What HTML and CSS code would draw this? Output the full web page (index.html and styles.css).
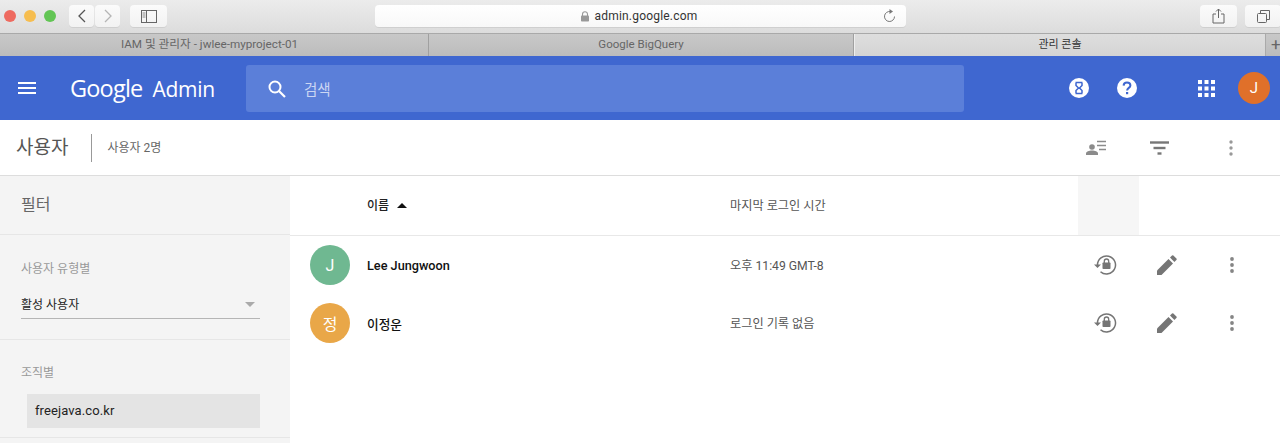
FILE: index.html
```html
<!DOCTYPE html>
<html lang="ko">
<head>
<meta charset="utf-8">
<title>관리 콘솔</title>
<link rel="stylesheet" href="styles.css">
</head>
<body>
<div class="toolbar">
  <div class="lights"><i class="light red"></i><i class="light yellow"></i><i class="light green"></i></div>
  <div class="navbtns">
    <div class="tbtn nav"><svg width="10" height="16" viewBox="0 0 10 16"><path d="M8 2 2 8l6 6" fill="none" stroke="#555" stroke-width="1.3"/></svg></div>
    <div class="tbtn nav"><svg width="10" height="16" viewBox="0 0 10 16"><path d="m2 2 6 6-6 6" fill="none" stroke="#b5b5b5" stroke-width="1.3"/></svg></div>
  </div>
  <div class="tbtn side"><svg width="16" height="13" viewBox="0 0 16 13"><rect x=".5" y=".5" width="15" height="12" fill="none" stroke="#666"/><path d="M5.5 0v13" stroke="#666"/><path d="M1.5 3h3M1.5 5h3M1.5 7h3" stroke="#888"/></svg></div>
  <div class="address">
    <span class="addr-text"><svg class="lock" width="8" height="11" viewBox="0 0 8 11"><path d="M1.5 5V3.2a2.5 2.5 0 0 1 5 0V5" fill="none" stroke="#999" stroke-width="1.1"/><rect y="4.5" width="8" height="6" rx=".8" fill="#999"/></svg>admin.google.com</span>
    <svg class="reload" width="13" height="14" viewBox="0 0 13 14"><path d="M7.5 2.6A5 5 0 1 0 11.5 7.5" fill="none" stroke="#777"/><path d="M6.5 0 10 2.6 6.5 5z" fill="#777"/></svg>
  </div>
  <div class="tbtn right"><svg width="13" height="16" viewBox="0 0 13 16"><path d="M4 6H1v9h11V6H9" fill="none" stroke="#666"/><path d="M6.5 10V1M4 3.5 6.5 1 9 3.5" fill="none" stroke="#666"/></svg></div>
  <div class="tbtn right last"><svg width="13" height="13" viewBox="0 0 13 13"><rect x=".5" y="3.5" width="9" height="9" rx="1" fill="none" stroke="#666"/><path d="M3.5 3V.5h9v9H10" fill="none" stroke="#666"/></svg></div>
</div>
<div class="tabs">
  <div class="tab">IAM 및 관리자 - jwlee-myproject-01</div>
  <div class="tab">Google BigQuery</div>
  <div class="tab active">관리 콘솔</div>
  <div class="tab-add">+</div>
</div>
<header class="appbar">
  <svg class="burger" width="18" height="12" viewBox="0 0 18 12"><path d="M0 1h18M0 6h18M0 11h18" stroke="#fff" stroke-width="2"/></svg>
  <div class="logo"><span class="logo-g">Google</span><span class="logo-a">Admin</span></div>
  <div class="search">
    <svg width="20" height="20" viewBox="0 0 20 20"><circle cx="8" cy="8" r="5.5" fill="none" stroke="#fff" stroke-width="2"/><path d="m12 12 6 6" stroke="#fff" stroke-width="2.2"/></svg>
    <span class="search-text">검색</span>
  </div>
  <div class="appicons">
    <svg class="hour" width="20" height="20" viewBox="0 0 20 20"><circle cx="10" cy="10" r="10" fill="#fff"/><path d="M6.500 4.500h7M6.500 15.500h7M7 5v2.500L9.500 10 7 12.500V15M13 5v2.500L10.500 10l2.500 2.500V15" fill="none" stroke="#3f67d0" stroke-width="1.5"/></svg>
    <svg class="help" width="20" height="20" viewBox="0 0 20 20"><circle cx="10" cy="10" r="10" fill="#fff"/><path d="M6.600 7.600A3.400 3.400 0 0 1 10 4.400c2 0 3.400 1.300 3.400 3 0 2.400-3.300 2.600-3.300 5.100" fill="none" stroke="#3f67d0" stroke-width="2"/><rect x="9" y="14" width="2.200" height="2.200" fill="#3f67d0"/></svg>
    <svg class="grid" width="17" height="17" viewBox="0 0 17 17"><path fill="#fff" d="M0 0h4v4H0zM6.500 0h4v4h-4zM13 0h4v4h-4zM0 6.500h4v4H0zM6.500 6.500h4v4h-4zM13 6.500h4v4h-4zM0 13h4v4H0zM6.500 13h4v4h-4zM13 13h4v4h-4z"/></svg>
    <div class="me">J</div>
  </div>
</header>
<div class="subbar">
  <h1 class="title">사용자</h1>
  <span class="count">사용자 2명</span>
  <div class="sub-actions">
    <svg width="21" height="15" viewBox="0 0 21 15"><circle cx="6" cy="7" r="2.800" fill="#8b8b8b"/><path d="M0 15v-1.500c0-2 3-3 6-3s6 1 6 3V15z" fill="#8b8b8b"/><path d="M11 1.500h9M11 5.500h9M13 9.500h7" stroke="#8b8b8b" stroke-width="1.500"/></svg>
    <svg class="act-filter" width="19" height="14" viewBox="0 0 19 14"><path d="M0 1.500h19" stroke="#777" stroke-width="2.400"/><path d="M3.500 7h12" stroke="#777" stroke-width="2.400"/><path d="M7.500 12.500h4" stroke="#777" stroke-width="2.400"/></svg>
    <svg class="act-more" width="4" height="16" viewBox="0 0 4 16"><circle cx="2" cy="2" r="1.700" fill="#999"/><circle cx="2" cy="8" r="1.700" fill="#999"/><circle cx="2" cy="14" r="1.700" fill="#999"/></svg>
  </div>
</div>
<main class="content">
  <aside class="filters">
    <div class="filter-head">필터</div>
    <section class="fsec fsec-type">
      <div class="flabel">사용자 유형별</div>
      <div class="select"><span>활성 사용자</span><i class="caret"></i></div>
    </section>
    <section class="fsec fsec-org">
      <div class="flabel">조직별</div>
      <div class="org">freejava.co.kr</div>
    </section>
  </aside>
  <div class="table">
    <div class="thead">
      <div class="c-name th-name">이름<i class="sort"></i></div>
      <div class="c-login th-login">마지막 로그인 시간</div>
      <div class="th-hl"></div>
    </div>
    <div class="row">
      <div class="avatar a-green">J</div>
      <div class="c-name uname">Lee Jungwoon</div>
      <div class="c-login login">오후 11:49 GMT-8</div>
      <div class="row-actions">
        <svg width="24" height="22" viewBox="0 0 24 22"><use href="#reset"/></svg>
        <svg class="pen" width="20" height="20" viewBox="0 0 20 20"><use href="#pen"/></svg>
        <svg class="more" width="4" height="16" viewBox="0 0 4 16"><use href="#dots"/></svg>
      </div>
    </div>
    <div class="row">
      <div class="avatar a-orange">정</div>
      <div class="c-name uname">이정운</div>
      <div class="c-login login">로그인 기록 없음</div>
      <div class="row-actions">
        <svg width="24" height="22" viewBox="0 0 24 22"><use href="#reset"/></svg>
        <svg class="pen" width="20" height="20" viewBox="0 0 20 20"><use href="#pen"/></svg>
        <svg class="more" width="4" height="16" viewBox="0 0 4 16"><use href="#dots"/></svg>
      </div>
    </div>
  </div>
</main>
<svg class="defs" width="0" height="0">
  <defs>
    <g id="reset">
      <path d="M4.500 11a9 9 0 1 1 3 6.700" fill="none" stroke="#757575" stroke-width="1.500"/>
      <path d="M1 10.500h7L4.500 14z" fill="#757575"/>
      <rect x="9.500" y="8.500" width="8" height="6.500" rx=".8" fill="#757575"/>
      <path d="M11.300 9V7.200a2.200 2.200 0 0 1 4.400 0V9" fill="none" stroke="#757575" stroke-width="1.300"/>
    </g>
    <g id="pen">
      <path d="M0 20v-4.500L11.500 4 16 8.500 4.500 20z" fill="#757575"/>
      <path d="M13 2.500 15 .5a1 1 0 0 1 1.400 0l3 3a1 1 0 0 1 0 1.400l-2 2z" fill="#757575"/>
    </g>
    <g id="dots"><circle cx="2" cy="2" r="1.900" fill="#858585"/><circle cx="2" cy="8" r="1.900" fill="#858585"/><circle cx="2" cy="14" r="1.900" fill="#858585"/></g>
  </defs>
</svg>
</body>
</html>
```
FILE: styles.css
```css
* { box-sizing: border-box; }
html, body { margin: 0; padding: 0; height: 443px; overflow: hidden; background: #fff; }
body { font-family: "Roboto", "Noto Sans CJK KR", sans-serif; color: #222; }
h1 { margin: 0; font-weight: 400; }

.toolbar { height: 33px; display: flex; align-items: center; padding: 0 0 1px 4px; background: linear-gradient(#ececec, #dcdcdc); }
.lights { display: flex; gap: 8px; width: 65px; }
.light { width: 12px; height: 12px; border-radius: 50%; }
.red { background: #ee6a5f; }
.yellow { background: #f6bd4f; }
.green { background: #62c554; }
.navbtns { display: flex; gap: 1px; }
.tbtn { height: 22px; display: flex; align-items: center; justify-content: center; background: linear-gradient(#fbfbfb, #f2f2f2); border-radius: 4px; box-shadow: 0 1px 0 #cfcfcf; }
.nav { width: 25px; }
.side { width: 37px; margin-left: 10px; }
.address { width: 531px; height: 22px; margin-left: 208px; background: linear-gradient(#fff, #f8f8f8); border-radius: 4px; box-shadow: 0 1px 0 #cfcfcf; display: flex; align-items: center; justify-content: center; position: relative; }
.addr-text { font-size: 12px; color: #333; letter-spacing: .2px; display: flex; align-items: center; gap: 6px; margin-left: -3px; }
.reload { position: absolute; right: 10px; top: 4px; }
.right { width: 37px; margin-left: auto; }
.right.last { margin-left: 8px; margin-right: -1px; width: 36px; }

.tabs { height: 23px; display: flex; background: linear-gradient(#c8c8c8, #bcbcbc); border-top: 1px solid #a9a9a9; }
.tab { width: 429px; flex: none; text-align: center; font-size: 11.700px; line-height: 21px; color: #666; border-right: 1px solid #a0a0a0; padding-right: 9px; }
.tab:nth-child(2) { width: 425px; padding-right: 0; font-size: 11.500px; }
.tab.active { width: 412px; padding-right: 0; font-size: 11px; background: linear-gradient(#dedede, #d4d4d4); color: #333; border-left: 1px solid #eee; border-right: 1px solid #aaa; }
.tab-add { flex: 1; color: #666; font-size: 17px; line-height: 21px; padding-left: 5px; overflow: hidden; }

.appbar { height: 64px; background: #3f67d0; display: flex; align-items: center; }
.burger { margin-left: 18px; flex: none; }
.logo { width: 176px; margin-left: 34px; color: #fff; display: flex; align-items: baseline; gap: 10px; flex: none; }
.logo-g { font-family: "Open Sans", sans-serif; font-size: 23.500px; letter-spacing: -.8px; }
.logo-a { font-family: "Open Sans", sans-serif; font-size: 21px; letter-spacing: -.25px; }
.search { width: 718px; height: 47px; background: #5b7fd9; border-radius: 3px; display: flex; align-items: center; padding-left: 21px; gap: 17px; color: #cbd6f3; font-size: 14.500px; flex: none; }
.search svg { margin-top: 2px; }
.appicons { display: flex; align-items: center; flex: 1; padding-left: 105px; }
.help { margin-left: 28px; }
.grid { margin-left: 61px; }
.me { width: 32px; height: 32px; margin-left: 23px; border-radius: 50%; background: #e0702a; color: #fff; font-size: 15px; display: flex; align-items: center; justify-content: center; }

.subbar { height: 56px; border-bottom: 1px solid #ddd; display: flex; align-items: center; padding-left: 16px; }
.title { font-size: 19px; color: #555; padding-right: 23px; line-height: 28px; }
.count { font-size: 12px; color: #666; border-left: 1px solid #999; height: 28px; line-height: 28px; padding-left: 15px; }
.sub-actions { margin-left: auto; display: flex; align-items: center; padding-right: 47px; }
.act-filter { margin-left: 43px; }
.act-more { margin-left: 60px; }

.content { display: flex; height: 268px; }
.filters { width: 290px; flex: none; background: #f4f4f4; }
.filter-head { height: 59px; line-height: 57px; padding-left: 21px; font-size: 16px; color: #666; border-bottom: 1px solid #e6e6e6; }
.fsec { padding: 0 30px 0 21px; border-bottom: 1px solid #e6e6e6; }
.fsec-type { height: 105px; padding-top: 25px; }
.fsec-org { height: 98px; padding-top: 24px; }
.flabel { font-size: 12px; color: #999; line-height: 18px; }
.select { margin-top: 18px; height: 23px; border-bottom: 1px solid #b5b5b5; display: flex; justify-content: space-between; align-items: flex-start; font-size: 12px; color: #222; line-height: 19px; padding-right: 5px; }
.caret { width: 0; height: 0; margin-top: 6px; border-left: 5px solid transparent; border-right: 5px solid transparent; border-top: 5px solid #aaa; }
.org { margin: 12px 0 0 6px; height: 34px; line-height: 33px; padding-left: 8px; background: #e4e4e4; font-size: 13px; color: #222; font-weight: 400; letter-spacing: .1px; }

.table { flex: 1; min-width: 0; }
.thead { height: 60px; display: flex; align-items: center; border-bottom: 1px solid #e8e8e8; padding-bottom: 2px; }
.c-name { margin-left: 77px; width: 363px; flex: none; }
.th-name { display: flex; align-items: center; font-size: 12px; color: #222; font-weight: 500; }
.sort { width: 0; height: 0; margin-left: 8px; margin-top: 2px; border-left: 5px solid transparent; border-right: 5px solid transparent; border-bottom: 5px solid #111; }
.c-login { width: 348px; flex: none; font-size: 12.200px; color: #555; }
.th-hl { width: 61px; height: 59px; background: #f6f6f6; margin-top: 2px; }
.row { height: 58px; display: flex; align-items: center; }
.avatar { width: 40px; height: 40px; margin-left: 20px; flex: none; border-radius: 50%; color: #fff; font-size: 16px; display: flex; align-items: center; justify-content: center; }
.a-green { background: #6fb891; }
.a-orange { background: #e9a748; }
.avatar + .c-name { margin-left: 17px; }
.uname { font-size: 12.700px; font-weight: 500; color: #111; }
.login { color: #555; }
.row-actions { display: flex; align-items: center; margin-left: 15px; }
.pen { margin-left: 40px; }
.more { margin-left: 53px; }
.defs { position: absolute; }
```
